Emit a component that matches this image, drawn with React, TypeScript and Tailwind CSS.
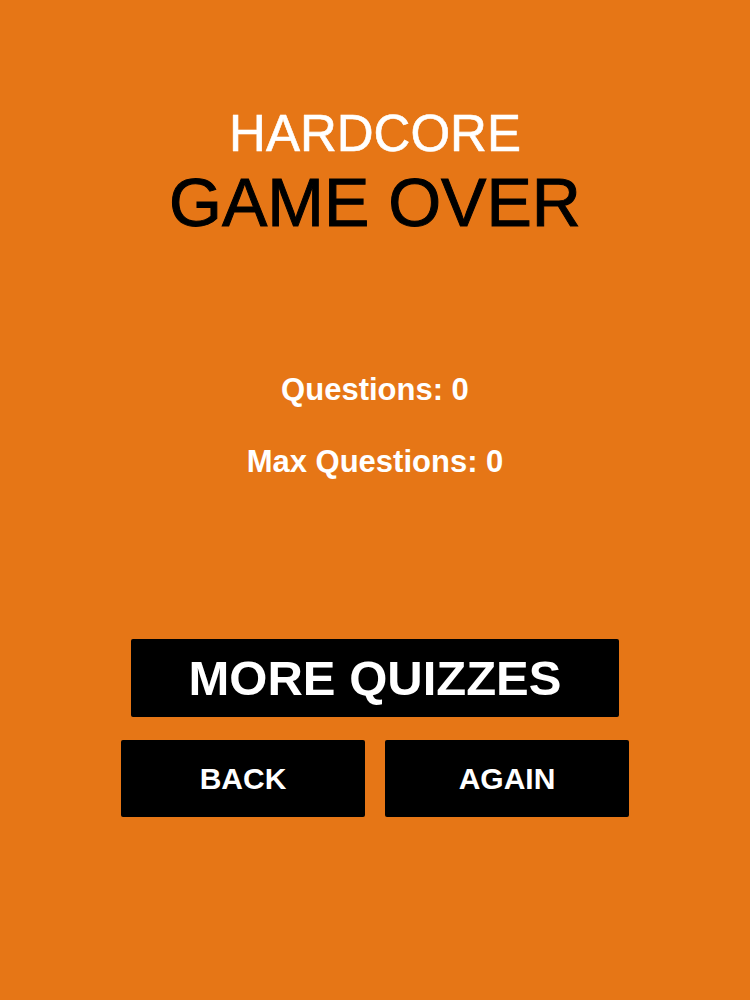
import React from "react";

export default function App() {
  return (
    <div
      className="w-[750px] h-[1000px] bg-[#e67616] flex flex-col items-center"
      style={{ fontFamily: '"Liberation Sans", Arial, sans-serif' }}
    >
      <div className="mt-[108px] text-[51px] leading-none text-white [-webkit-text-stroke:0.6px_white]">HARDCORE</div>
      <div className="mt-[9px] text-[68px] leading-none text-black [-webkit-text-stroke:1px_black]">GAME OVER</div>
      <div className="mt-[138px] text-[31px] leading-none font-bold text-white">Questions: 0</div>
      <div className="mt-[41px] text-[31px] leading-none font-bold text-white">Max Questions: 0</div>
      <button className="mt-[162px] w-[488px] h-[78px] bg-black rounded-[2px] text-white font-bold text-[49px] leading-none flex items-center justify-center">
        MORE QUIZZES
      </button>
      <div className="mt-[23px] flex gap-[20px]">
        <button className="w-[244px] h-[77px] bg-black rounded-[2px] text-white font-bold text-[30px] leading-none flex items-center justify-center">
          BACK
        </button>
        <button className="w-[244px] h-[77px] bg-black rounded-[2px] text-white font-bold text-[30px] leading-none flex items-center justify-center">
          AGAIN
        </button>
      </div>
    </div>
  );
}
